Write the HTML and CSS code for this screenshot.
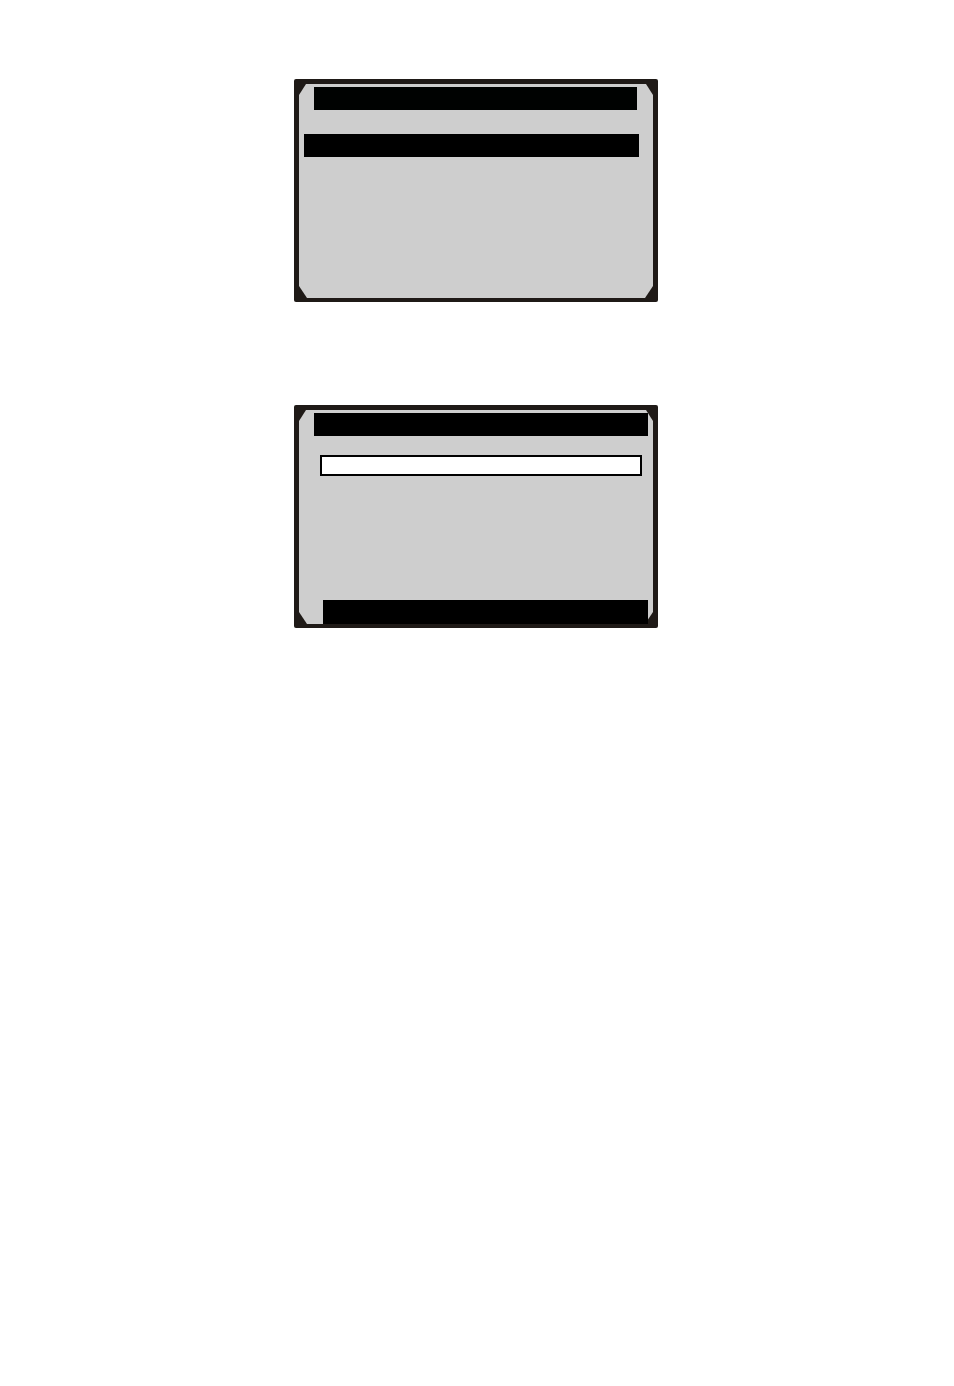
FILE: index.html
```html
<!DOCTYPE html>
<html lang="en">
<head>
    <meta charset="UTF-8">
    <meta name="viewport" content="width=device-width, initial-scale=1.0">
    <title>Display</title>
    <link rel="stylesheet" href="styles.css">
</head>
<body>

<main class="page">
    <section class="display">
        <div class="screen">
            <div class="bar title-short"></div>
            <div class="bar selected"></div>
        </div>
    </section>

    <section class="display">
        <div class="screen">
            <div class="bar title"></div>
            <input class="field" type="text" aria-label="Value">
            <div class="bar footer"></div>
        </div>
    </section>
</main>

</body>
</html>
```

FILE: styles.css
```css
* {
    box-sizing: border-box;
}
body {
    font-family: Arial, "Liberation Sans", sans-serif;
    background-color: #fff;
    margin: 0;
}
.page {
    display: flex;
    flex-direction: column;
    align-items: center;
    gap: 103px;
    padding: 79px 10px 79px 8px;
}
.display {
    width: 100%;
    max-width: 364px;
    padding: 5px 5px 4px;
    background-color: #1f1a17;
    border-radius: 2px;
}
.screen {
    position: relative;
    z-index: 0;
    display: flex;
    flex-direction: column;
    min-height: 214px;
    padding-top: 3px;
}
/* grey glass with cut corners, under the bars */
.screen::before {
    content: "";
    position: absolute;
    inset: 0;
    z-index: -1;
    background-color: #cecece;
    clip-path: polygon(7px 0, calc(100% - 7px) 0, 100% 11px, 100% calc(100% - 12px), calc(100% - 8px) 100%, 8px 100%, 0 calc(100% - 12px), 0 11px);
}
.bar {
    height: 23px;
    background-color: #000;
}
.title-short {
    margin: 0 16px 0 15px;
    background-color: #000201;
}
.selected {
    margin: 24px 14px 0 5px;
}
.title {
    margin: 0 5px 0 15px;
}
.field {
    height: 21px;
    margin: 19px 11px 0 21px;
    padding: 0 4px;
    border: 2px solid #000;
    border-radius: 0;
    background-color: #fff;
    font-size: 14px;
}
.footer {
    height: 24px;
    margin: auto 5px 0 24px;
}
```
